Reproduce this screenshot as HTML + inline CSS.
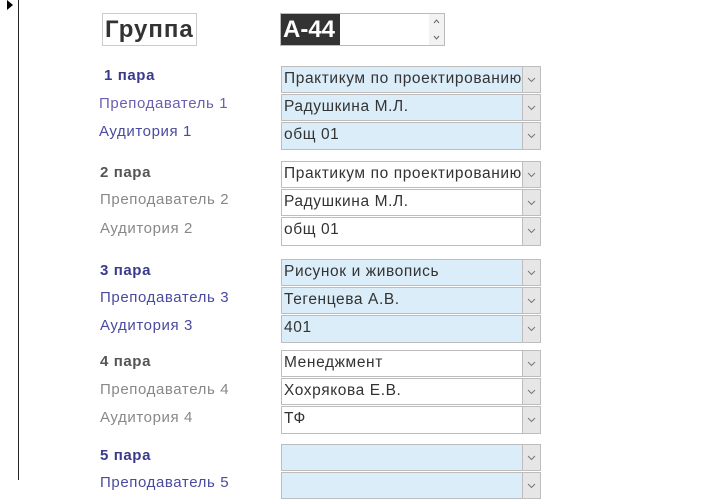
<!DOCTYPE html>
<html><head><meta charset="utf-8"><style>
body{margin:0;width:720px;height:480px;overflow:hidden;background:#fff;position:relative;font-family:"Liberation Sans","DejaVu Sans",sans-serif;}
.a{position:absolute;}
.lbl{position:absolute;font-size:15px;letter-spacing:0.6px;white-space:nowrap;}
.b{font-weight:bold;}
.box{position:absolute;left:281px;width:260px;height:27px;border:1px solid #bdbdbd;box-sizing:border-box;font-size:15.5px;letter-spacing:0.6px;color:#333;white-space:nowrap;overflow:hidden;}
.box .t{position:absolute;left:2px;top:3px;width:240px;overflow:hidden;}
.box .dd{position:absolute;right:0;top:0;width:17px;height:100%;background:#e6e6e6;border-left:1px solid #bdbdbd;}
.box .dd svg{position:absolute;left:4px;top:10px;}
.blue{background:#daedf8;}
.wh{background:#fff;}
</style></head><body>
<div class="a" style="left:18px;top:0;width:1px;height:480px;background:#222"></div>
<div class="a" style="left:7px;top:0;width:0;height:0;border-top:5px solid transparent;border-bottom:5px solid transparent;border-left:6px solid #000"></div>

<div class="a" style="left:102px;top:13px;width:95px;height:33px;border:1px solid #ccc;box-sizing:border-box;font-size:24px;font-weight:bold;color:#333;line-height:31px;padding-left:2px;letter-spacing:1px">Группа</div>
<div class="a" style="left:280px;top:13px;width:165px;height:33px;border:1px solid #bbb;box-sizing:border-box;"></div>
<div class="a" style="left:281px;top:14px;width:59px;height:31px;background:#333;color:#fff;font-size:24px;font-weight:bold;line-height:31px;padding-left:2px;box-sizing:border-box">А-44</div>
<div class="a" style="left:429px;top:14px;width:15px;height:31px;background:#f2f2f2;">
<svg width="15" height="31"><path d="M5 9 L7.5 6 L10 9" fill="none" stroke="#666" stroke-width="1"/><path d="M5 22 L7.5 25 L10 22" fill="none" stroke="#666" stroke-width="1"/></svg></div>

<div class="lbl b" style="left:104px;top:67px;color:#3a3a8c">1 пара</div>
<div class="lbl" style="left:99px;top:95px;color:#6a5fb0">Преподаватель 1</div>
<div class="lbl" style="left:99px;top:123px;color:#4a4aa0">Аудитория 1</div>
<div class="box blue" style="top:66px"><span class="t">Практикум по проектированию</span><span class="dd"><svg width="9" height="6"><path d="M1 1 L4.5 4.5 L8 1" fill="none" stroke="#777"/></svg></span></div>
<div class="box blue" style="top:94px"><span class="t">Радушкина М.Л.</span><span class="dd"><svg width="9" height="6"><path d="M1 1 L4.5 4.5 L8 1" fill="none" stroke="#777"/></svg></span></div>
<div class="box blue" style="top:122px;height:28px"><span class="t">общ 01</span><span class="dd"><svg width="9" height="6"><path d="M1 1 L4.5 4.5 L8 1" fill="none" stroke="#777"/></svg></span></div>

<div class="lbl b" style="left:100px;top:164px;color:#555">2 пара</div>
<div class="lbl" style="left:100px;top:191px;color:#888">Преподаватель 2</div>
<div class="lbl" style="left:100px;top:220px;color:#888">Аудитория 2</div>
<div class="box wh" style="top:161px"><span class="t">Практикум по проектированию</span><span class="dd"><svg width="9" height="6"><path d="M1 1 L4.5 4.5 L8 1" fill="none" stroke="#777"/></svg></span></div>
<div class="box wh" style="top:189px"><span class="t">Радушкина М.Л.</span><span class="dd"><svg width="9" height="6"><path d="M1 1 L4.5 4.5 L8 1" fill="none" stroke="#777"/></svg></span></div>
<div class="box wh" style="top:217px;height:29px"><span class="t">общ 01</span><span class="dd"><svg width="9" height="6"><path d="M1 1 L4.5 4.5 L8 1" fill="none" stroke="#777"/></svg></span></div>

<div class="lbl b" style="left:100px;top:262px;color:#3a3a8c">3 пара</div>
<div class="lbl" style="left:100px;top:289px;color:#4a4aa0">Преподаватель 3</div>
<div class="lbl" style="left:100px;top:317px;color:#4a4aa0">Аудитория 3</div>
<div class="box blue" style="top:259px"><span class="t">Рисунок и живопись</span><span class="dd"><svg width="9" height="6"><path d="M1 1 L4.5 4.5 L8 1" fill="none" stroke="#777"/></svg></span></div>
<div class="box blue" style="top:287px"><span class="t">Тегенцева А.В.</span><span class="dd"><svg width="9" height="6"><path d="M1 1 L4.5 4.5 L8 1" fill="none" stroke="#777"/></svg></span></div>
<div class="box blue" style="top:315px;height:28px"><span class="t">401</span><span class="dd"><svg width="9" height="6"><path d="M1 1 L4.5 4.5 L8 1" fill="none" stroke="#777"/></svg></span></div>

<div class="lbl b" style="left:100px;top:353px;color:#555">4 пара</div>
<div class="lbl" style="left:100px;top:381px;color:#888">Преподаватель 4</div>
<div class="lbl" style="left:100px;top:409px;color:#888">Аудитория 4</div>
<div class="box wh" style="top:350px"><span class="t">Менеджмент</span><span class="dd"><svg width="9" height="6"><path d="M1 1 L4.5 4.5 L8 1" fill="none" stroke="#777"/></svg></span></div>
<div class="box wh" style="top:378px"><span class="t">Хохрякова Е.В.</span><span class="dd"><svg width="9" height="6"><path d="M1 1 L4.5 4.5 L8 1" fill="none" stroke="#777"/></svg></span></div>
<div class="box wh" style="top:406px;height:28px"><span class="t">ТФ</span><span class="dd"><svg width="9" height="6"><path d="M1 1 L4.5 4.5 L8 1" fill="none" stroke="#777"/></svg></span></div>

<div class="lbl b" style="left:100px;top:447px;color:#3a3a8c">5 пара</div>
<div class="lbl" style="left:100px;top:474px;color:#4a4aa0">Преподаватель 5</div>
<div class="box blue" style="top:444px"><span class="t"></span><span class="dd"><svg width="9" height="6"><path d="M1 1 L4.5 4.5 L8 1" fill="none" stroke="#777"/></svg></span></div>
<div class="box blue" style="top:472px"><span class="t"></span><span class="dd"><svg width="9" height="6"><path d="M1 1 L4.5 4.5 L8 1" fill="none" stroke="#777"/></svg></span></div>
</body></html>
